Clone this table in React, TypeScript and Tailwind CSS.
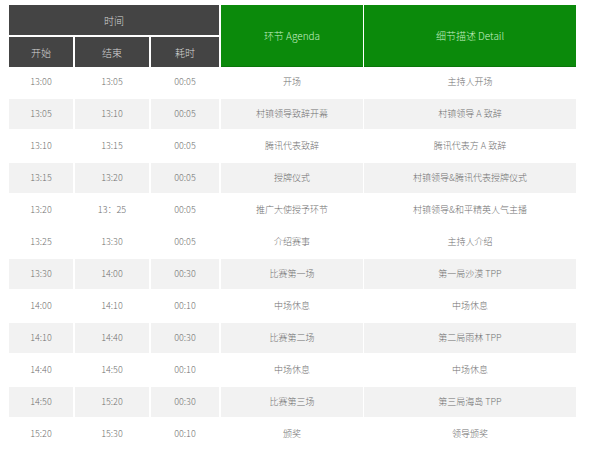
import React from "react";

const rows: [string, string, string, string, string][] = [
  ["13:00", "13:05", "00:05", "开场", "主持人开场"],
  ["13:05", "13:10", "00:05", "村镇领导致辞开幕", "村镇领导 A 致辞"],
  ["13:10", "13:15", "00:05", "腾讯代表致辞", "腾讯代表方 A 致辞"],
  ["13:15", "13:20", "00:05", "授牌仪式", "村镇领导&腾讯代表授牌仪式"],
  ["13:20", "13：25", "00:05", "推广大使授予环节", "村镇领导&和平精英人气主播"],
  ["13:25", "13:30", "00:05", "介绍赛事", "主持人介绍"],
  ["13:30", "14:00", "00:30", "比赛第一场", "第一局沙漠 TPP"],
  ["14:00", "14:10", "00:10", "中场休息", "中场休息"],
  ["14:10", "14:40", "00:30", "比赛第二场", "第二局雨林 TPP"],
  ["14:40", "14:50", "00:10", "中场休息", "中场休息"],
  ["14:50", "15:20", "00:30", "比赛第三场", "第三局海岛 TPP"],
  ["15:20", "15:30", "00:10", "颁奖", "领导颁奖"],
];

const grayRows = [1, 3, 6, 8, 10];

const font = {
  fontFamily: '"Noto Sans CJK SC", "Noto Sans", sans-serif',
};

export default function App() {
  return (
    <div
      className="w-[590px] h-[455px] bg-white overflow-hidden pt-[5px] pl-[9px] font-light"
      style={font}
    >
      {/* Header */}
      <div className="flex h-[62px]">
        <div className="flex flex-col w-[210px]">
          <div className="h-[30px] bg-[#444444] flex items-center justify-center text-[10px] text-[#d6d6d6]">
            时间
          </div>
          <div className="flex mt-[2px] h-[30px]">
            <div className="w-[64px] bg-[#444444] flex items-center justify-center text-[10px] text-[#d6d6d6]">
              开始
            </div>
            <div className="w-[74px] ml-[2px] bg-[#444444] flex items-center justify-center text-[10px] text-[#d6d6d6]">
              结束
            </div>
            <div className="w-[68px] ml-[2px] bg-[#444444] flex items-center justify-center text-[10px] text-[#d6d6d6]">
              耗时
            </div>
          </div>
        </div>
        <div className="w-[142px] ml-[2px] bg-[#0b8a0b] border-b border-[#0a760a] flex items-center justify-center text-[10px] text-[#c4f0c4]">
          环节 Agenda
        </div>
        <div className="w-[212px] ml-[1px] bg-[#0b8a0b] border-b border-[#0a760a] flex items-center justify-center text-[10px] text-[#c4f0c4]">
          细节描述 Detail
        </div>
      </div>

      {/* Body */}
      <div className="flex flex-col">
        {rows.map((r, i) => {
          const bg = grayRows.includes(i) ? "bg-[#f2f2f2]" : "bg-white";
          return (
            <div key={i} className="flex h-[32px] pb-[2px] text-[9px] text-[#707070]">
              <div className={`w-[64px] ${bg} flex items-center justify-center`}>{r[0]}</div>
              <div className={`w-[74px] ml-[2px] ${bg} flex items-center justify-center`}>{r[1]}</div>
              <div className={`w-[68px] ml-[2px] ${bg} flex items-center justify-center`}>{r[2]}</div>
              <div className={`w-[142px] ml-[2px] ${bg} flex items-center justify-center`}>{r[3]}</div>
              <div className={`w-[212px] ml-[1px] ${bg} flex items-center justify-center`}>{r[4]}</div>
            </div>
          );
        })}
      </div>
    </div>
  );
}
